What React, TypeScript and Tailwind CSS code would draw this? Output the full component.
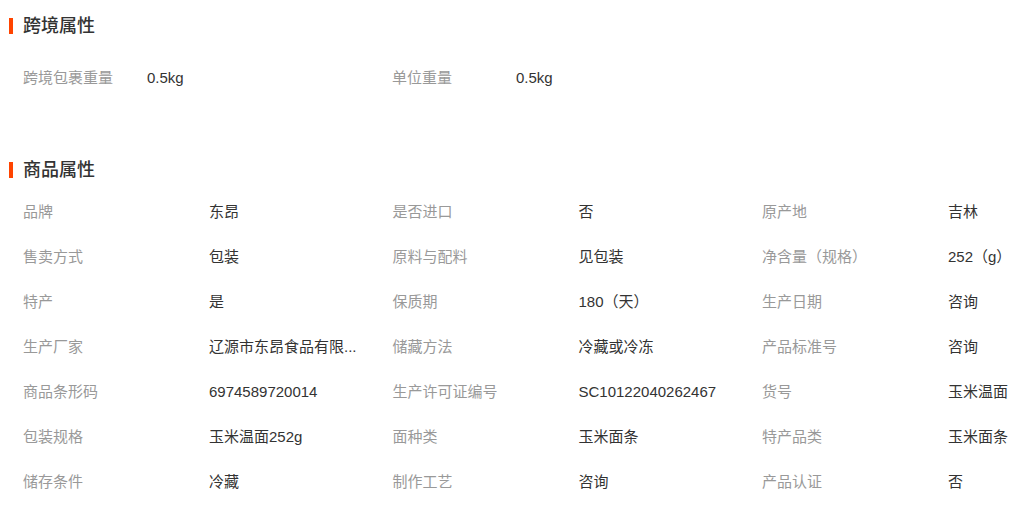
const crossBorder: [string, string][] = [
  ['跨境包裹重量', '0.5kg'],
  ['单位重量', '0.5kg'],
];

const attrs: [string, string][] = [
  ['品牌', '东昂'],
  ['是否进口', '否'],
  ['原产地', '吉林'],
  ['售卖方式', '包装'],
  ['原料与配料', '见包装'],
  ['净含量（规格）', '252（g）'],
  ['特产', '是'],
  ['保质期', '180（天）'],
  ['生产日期', '咨询'],
  ['生产厂家', '辽源市东昂食品有限...'],
  ['储藏方法', '冷藏或冷冻'],
  ['产品标准号', '咨询'],
  ['商品条形码', '6974589720014'],
  ['生产许可证编号', 'SC10122040262467'],
  ['货号', '玉米温面'],
  ['包装规格', '玉米温面252g'],
  ['面种类', '玉米面条'],
  ['特产品类', '玉米面条'],
  ['储存条件', '冷藏'],
  ['制作工艺', '咨询'],
  ['产品认证', '否'],
];

function SectionTitle({ text }: { text: string }) {
  return (
    <div className="flex h-[20px] items-center">
      <span className="h-[16px] w-[4px] bg-[#ff4400]" />
      <h2 className="ml-[10px] text-[18px] font-medium leading-[20px] text-[#333]">{text}</h2>
    </div>
  );
}

export default function App() {
  return (
    <div className="h-[506px] w-[1035px] overflow-hidden bg-white pl-[9px] font-['Liberation_Sans','Noto_Sans_CJK_SC',sans-serif] text-[15px]">
      {/* 跨境属性 */}
      <div className="pt-[16px]">
        <SectionTitle text="跨境属性" />
        <div className="mt-[20px] flex pl-[14px]">
          {crossBorder.map(([label, value]) => (
            <div key={label} className="flex h-[45px] items-center">
              <span className="w-[124px] text-[#999]">{label}</span>
              <span className="w-[245px] text-[#333]">{value}</span>
            </div>
          ))}
        </div>
      </div>

      {/* 商品属性 */}
      <div className="mt-[59px]">
        <SectionTitle text="商品属性" />
        <div className="mt-[10px] grid w-[1110px] grid-cols-[186px_183.5px_186px_183.5px_186px_183.5px] pl-[14px]">
          {attrs.map(([label, value]) => (
            <div key={label} className="contents">
              <div className="flex h-[45px] items-center whitespace-nowrap text-[#999]">{label}</div>
              <div className="flex h-[45px] items-center whitespace-nowrap text-[#333]">{value}</div>
            </div>
          ))}
        </div>
      </div>
    </div>
  );
}
